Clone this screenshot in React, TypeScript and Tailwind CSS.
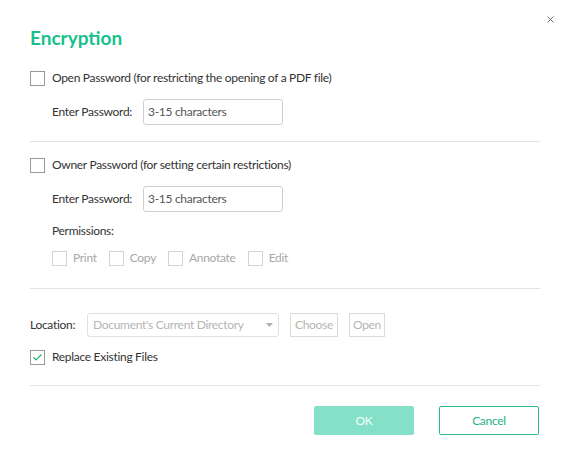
import { X, Check } from 'lucide-react';

function Box({ checked, disabled }: { checked?: boolean; disabled?: boolean }) {
  return (
    <span
      className={`flex h-[15px] w-[15px] shrink-0 items-center justify-center border bg-white ${
        disabled ? 'border-[#d4d4d4]' : 'border-[#9a9a9a]'
      }`}
    >
      {checked && <Check className="h-[11px] w-[11px] text-[#1fb26b]" strokeWidth={2.5} />}
    </span>
  );
}

function PasswordRow() {
  return (
    <div className="flex items-center pl-[22px]">
      <span className="w-[91px] text-[#333]">Enter Password:</span>
      <div className="flex h-[26px] w-[140px] items-center rounded-[3px] border border-[#cfcfcf] px-[4px] text-[#555]">
        3-15 characters
      </div>
    </div>
  );
}

export default function App() {
  const perms = ['Print', 'Copy', 'Annotate', 'Edit'];
  return (
    <div
      className="relative h-[450px] w-[570px] bg-white px-[30px] text-[12px] tracking-[-0.3px] text-[#333]"
      style={{ fontFamily: 'Lato, "Liberation Sans", sans-serif' }}
    >
      <button className="absolute right-[14px] top-[14px] text-[#444]">
        <X className="h-[11px] w-[11px]" strokeWidth={1.6} />
      </button>

      <h1 className="pt-[26px] text-[19px] font-bold leading-[24px] tracking-normal text-[#19bf8c]">Encryption</h1>

      {/* open password */}
      <div className="mt-[20px] flex items-center gap-[7px] leading-[16px]">
        <Box />
        <span>Open Password (for restricting the opening of a PDF file)</span>
      </div>
      <div className="mt-[13px]">
        <PasswordRow />
      </div>

      <div className="mt-[16px] h-px bg-[#e3e3e3]" />

      {/* owner password */}
      <div className="mt-[15px] flex items-center gap-[7px] leading-[16px]">
        <Box />
        <span>Owner Password (for setting certain restrictions)</span>
      </div>
      <div className="mt-[13px]">
        <PasswordRow />
      </div>
      <div className="mt-[11px] pl-[22px] leading-[16px] text-[#333]">Permissions:</div>
      <div className="mt-[11px] flex items-center pl-[22px] leading-[16px] text-[#a8a8a8]">
        {perms.map((p) => (
          <div key={p} className="mr-[12px] flex items-center gap-[6px]">
            <Box disabled />
            <span>{p}</span>
          </div>
        ))}
      </div>

      <div className="mt-[22px] h-px bg-[#e3e3e3]" />

      {/* location */}
      <div className="mt-[24px] flex items-center">
        <span className="w-[57px] text-[#333]">Location:</span>
        <div className="flex h-[24px] w-[192px] items-center justify-between rounded-[3px] border border-[#e0e0e0] pl-[5px] pr-[4px] text-[#b5b5b5]">
          <span>Document's Current Directory</span>
          <svg width="7" height="4" viewBox="0 0 7 4" className="mr-[1px]">
            <path d="M0 0h7L3.5 4z" fill="#b0b0b0" />
          </svg>
        </div>
        <div className="ml-[11px] flex h-[24px] w-[48px] items-center justify-center border border-[#dcdcdc] text-[#b5b5b5]">
          Choose
        </div>
        <div className="ml-[11px] flex h-[24px] w-[36px] items-center justify-center border border-[#dcdcdc] text-[#b5b5b5]">
          Open
        </div>
      </div>
      <div className="mt-[12px] flex items-center gap-[7px] leading-[16px]">
        <Box checked />
        <span>Replace Existing Files</span>
      </div>

      <div className="mt-[20px] h-px bg-[#e3e3e3]" />

      {/* footer */}
      <div className="mt-[20px] flex justify-end gap-[25px] pr-[1px]">
        <button className="h-[29px] w-[100px] rounded-[2px] bg-[#84e0c6] text-[#f4fffb]">OK</button>
        <button className="h-[29px] w-[100px] rounded-[2px] border border-[#2dbd8e] text-[#1fb185]">Cancel</button>
      </div>
    </div>
  );
}
